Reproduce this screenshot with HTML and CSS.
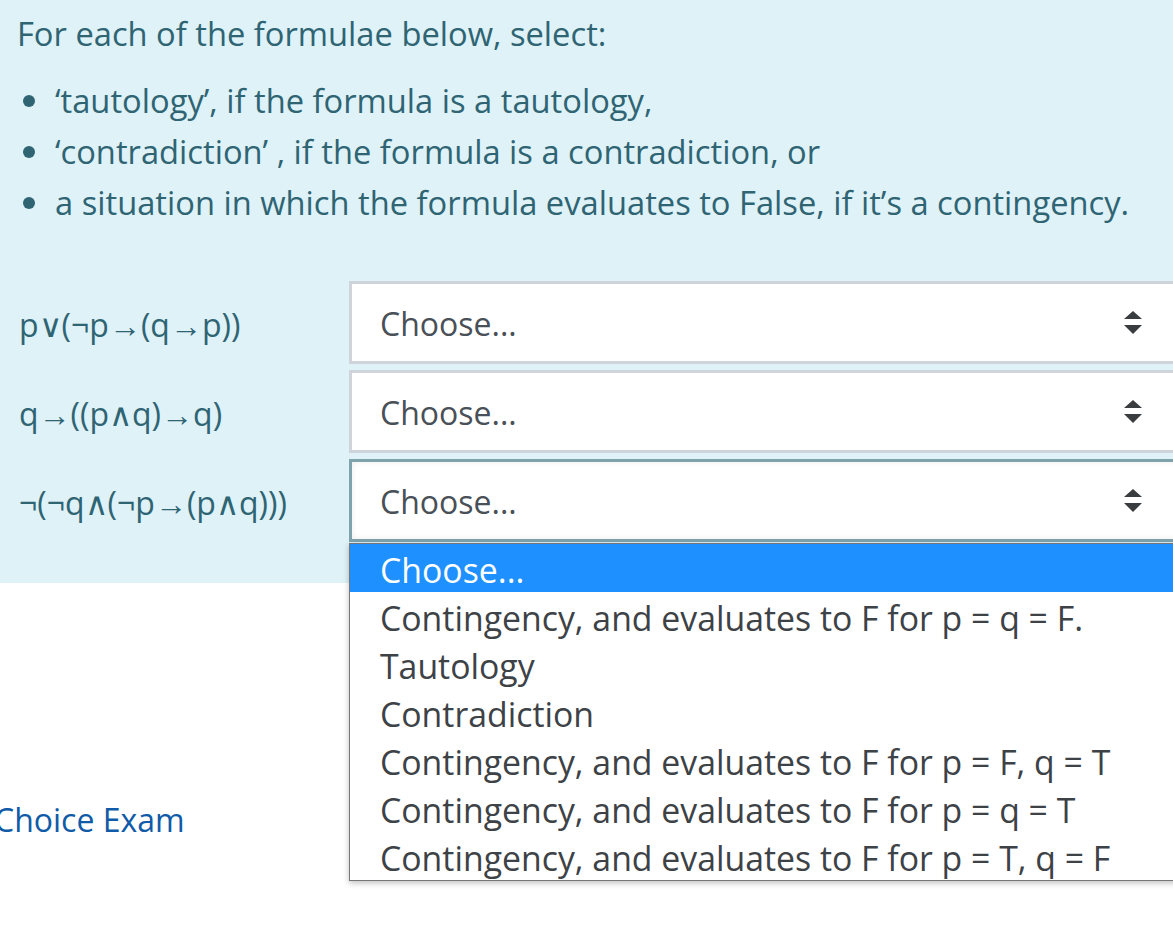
FILE: index.html
```html
<!DOCTYPE html>
<html>
<head>
<meta charset="utf-8">
<link rel="stylesheet" href="styles.css">
</head>
<body>
<div class="page">
  <div class="info">
    <p class="intro">For each of the formulae below, select:</p>
    <ul class="bullets">
      <li>‘tautology’, if the formula is a tautology,</li>
      <li>‘contradiction’ , if the formula is a contradiction, or</li>
      <li>a situation in which the formula evaluates to False, if it’s a contingency.</li>
    </ul>
    <div class="rows">
      <div class="row">
        <div class="label">p∨(¬p→(q→p))</div>
        <div class="select"><span>Choose...</span>
          <svg class="arrows" width="18" height="24" viewBox="0 0 18 24"><path d="M9 0 L18 8 L0 8 Z" fill="#3a3d40"/><path d="M0 14 L18 14 L9 23 Z" fill="#3a3d40"/></svg>
        </div>
      </div>
      <div class="row">
        <div class="label">q→((p∧q)→q)</div>
        <div class="select"><span>Choose...</span>
          <svg class="arrows" width="18" height="24" viewBox="0 0 18 24"><path d="M9 0 L18 8 L0 8 Z" fill="#3a3d40"/><path d="M0 14 L18 14 L9 23 Z" fill="#3a3d40"/></svg>
        </div>
      </div>
      <div class="row">
        <div class="label">¬(¬q∧(¬p→(p∧q)))</div>
        <div class="select focused"><span>Choose...</span>
          <svg class="arrows" width="18" height="24" viewBox="0 0 18 24"><path d="M9 0 L18 8 L0 8 Z" fill="#3a3d40"/><path d="M0 14 L18 14 L9 23 Z" fill="#3a3d40"/></svg>
        </div>
      </div>
    </div>
  </div>
  <div class="footer-link"><a href="#">Choice Exam</a></div>
  <div class="dropdown">
    <div class="opt active">Choose...</div>
    <div class="opt">Contingency, and evaluates to F for p = q = F.</div>
    <div class="opt">Tautology</div>
    <div class="opt">Contradiction</div>
    <div class="opt">Contingency, and evaluates to F for p = F, q = T</div>
    <div class="opt">Contingency, and evaluates to F for p = q = T</div>
    <div class="opt">Contingency, and evaluates to F for p = T, q = F</div>
  </div>
</div>
</body>
</html>
```
FILE: styles.css
```css
html, body {
  margin: 0;
  padding: 0;
  background: #fff;
  overflow: hidden;
}
body {
  font-family: "Open Sans", "Noto Sans", sans-serif;
  font-size: 32.7px;
}
.page {
  position: relative;
  width: 1173px;
  height: 930px;
  overflow: hidden;
}
.info {
  background: #def2f8;
  color: #2f6473;
  padding: 8px 0 41px 17px;
}
.intro {
  margin: 0;
  line-height: 51px;
}
.bullets {
  margin: 16px 0 0 0;
  padding: 0 0 0 38px;
  line-height: 51px;
}
.bullets li {
  list-style: none;
  position: relative;
}
.bullets li::before {
  content: "";
  position: absolute;
  left: -32px;
  top: 20px;
  width: 12px;
  height: 12px;
  border-radius: 50%;
  background: #2f6473;
}
.rows {
  margin-top: 53px;
  display: flex;
  flex-direction: column;
  gap: 6px;
}
.row {
  display: flex;
  align-items: center;
}
.label {
  width: 330px;
  padding-left: 2px;
  flex: none;
  padding-top: 4px;
  font-size: 32px;
}
.select {
  box-sizing: border-box;
  width: 840px;
  height: 83px;
  background: #fff;
  border: 3px solid #ced4da;
  color: #495057;
  display: flex;
  align-items: center;
  justify-content: space-between;
  padding: 0 0 0 28px;
  flex: none;
  font-size: 32px;
}
.select span {
  padding-top: 2px;
}
.select .arrows {
  margin-right: 44px;
}
.select.focused {
  border-color: #7ea3ad;
  box-shadow: inset 0 0 6px rgba(0,0,0,0.08);
}
.footer-link {
  padding: 212px 0 0 0;
  margin-left: -6px;
  line-height: 50px;
  font-size: 32px;
}
.footer-link a {
  color: #0f5ba7;
  text-decoration: none;
}
.dropdown {
  position: absolute;
  left: 349px;
  top: 543px;
  width: 840px;
  background: #fff;
  border: 1px solid #767676;
  box-shadow: 0 2px 6px rgba(0,0,0,0.25);
  color: #3d4247;
  font-size: 33.8px;
}
.opt {
  height: 48px;
  line-height: 52px;
  padding-left: 30px;
  white-space: nowrap;
}
.opt.active {
  background: #1e90ff;
  color: #fff;
}
```
